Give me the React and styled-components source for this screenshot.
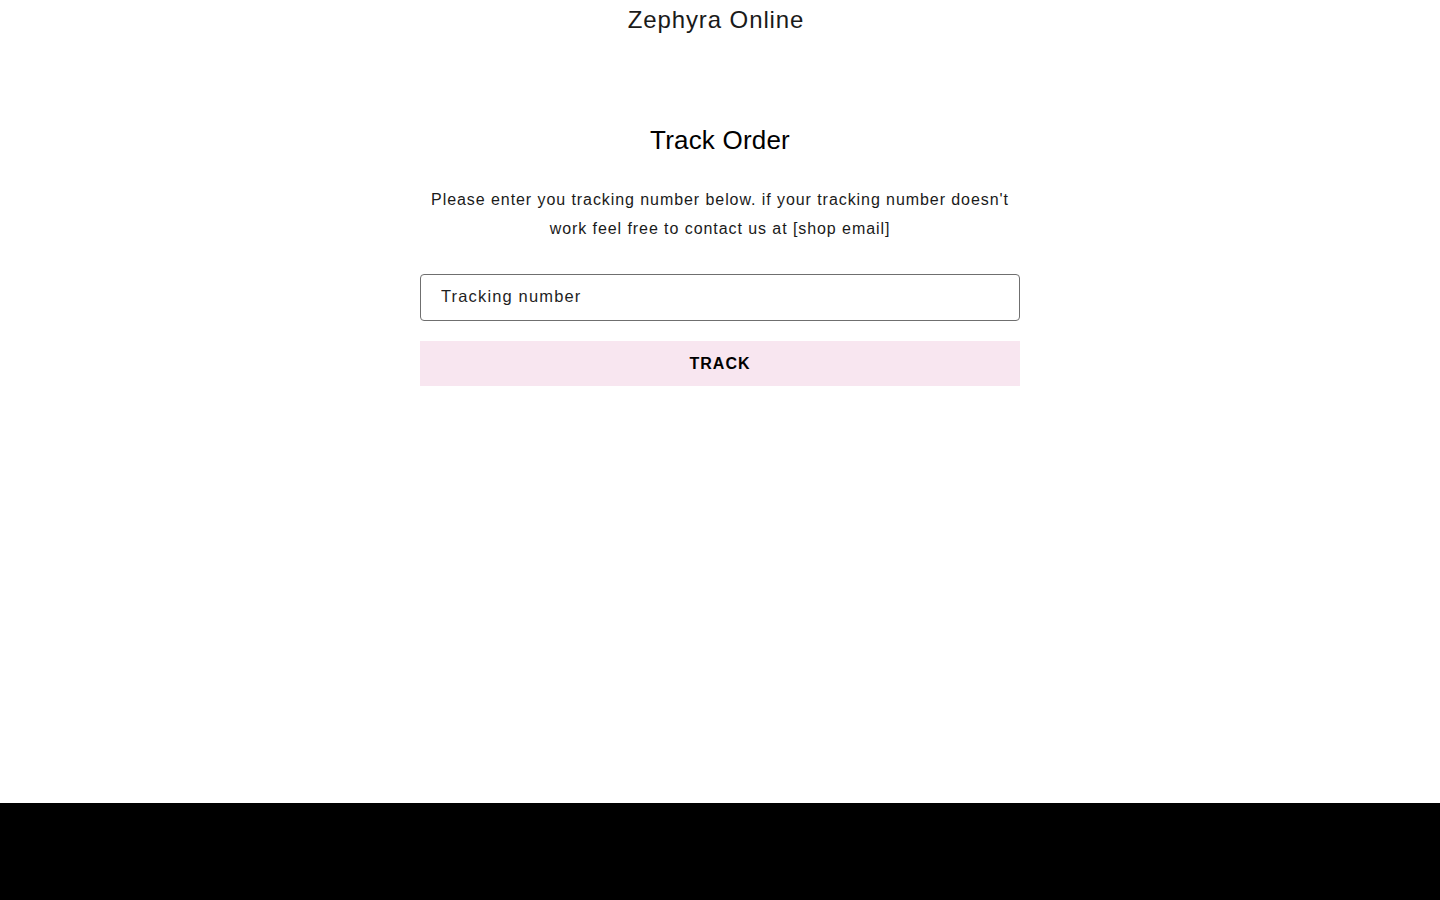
import React from "react";
import styled, { createGlobalStyle } from "styled-components";

const Global = createGlobalStyle`
  html, body { margin: 0; padding: 0; background: #fff; }
  body { font-family: "Liberation Sans", Arial, sans-serif; color: #121212; }
`;

const Page = styled.div`
  min-height: 900px;
  display: flex;
  flex-direction: column;
`;

const Header = styled.header`
  height: 40px;
  display: flex;
  justify-content: center;
  padding-right: 8px;
  font-size: 24px;
  line-height: 40px;
  letter-spacing: 0.9px;
  color: #1a1a1a;
`;

const Main = styled.main`
  flex: 1;
  display: flex;
  flex-direction: column;
  align-items: center;
  padding-top: 83px;
`;

const Title = styled.h1`
  margin: 0;
  font-size: 26px;
  font-weight: 400;
  letter-spacing: 0.2px;
  line-height: 34px;
  color: #000;
`;

const Intro = styled.p`
  width: 600px;
  margin: 28px 0 0;
  text-align: center;
  font-size: 16px;
  line-height: 29px;
  letter-spacing: 0.93px;
  color: #1a1a1a;
`;

const Form = styled.form`
  width: 600px;
  margin-top: 31px;
  display: flex;
  flex-direction: column;
  gap: 20px;
`;

const Input = styled.input`
  box-sizing: border-box;
  height: 47px;
  width: 100%;
  border: 1px solid #6f6f6f;
  border-radius: 4px;
  padding: 0 20px 2px;
  font-family: inherit;
  font-size: 16.5px;
  letter-spacing: 1.15px;
  outline: none;
  &::placeholder { color: #1f1f1f; }
`;

const Button = styled.button`
  height: 45px;
  border: none;
  background: #f8e6f0;
  font-family: inherit;
  font-size: 16px;
  font-weight: 700;
  letter-spacing: 1px;
  color: #000;
  cursor: pointer;
`;

const Footer = styled.footer`
  height: 97px;
  background: #000;
`;

export default function App() {
  return (
    <Page>
      <Global />
      <Header>Zephyra Online</Header>
      <Main>
        <Title>Track Order</Title>
        <Intro>
          Please enter you tracking number below. if your tracking number doesn't work feel free to contact us at [shop email]
        </Intro>
        <Form onSubmit={(e) => e.preventDefault()}>
          <Input placeholder="Tracking number" />
          <Button type="submit">TRACK</Button>
        </Form>
      </Main>
      <Footer />
    </Page>
  );
}
